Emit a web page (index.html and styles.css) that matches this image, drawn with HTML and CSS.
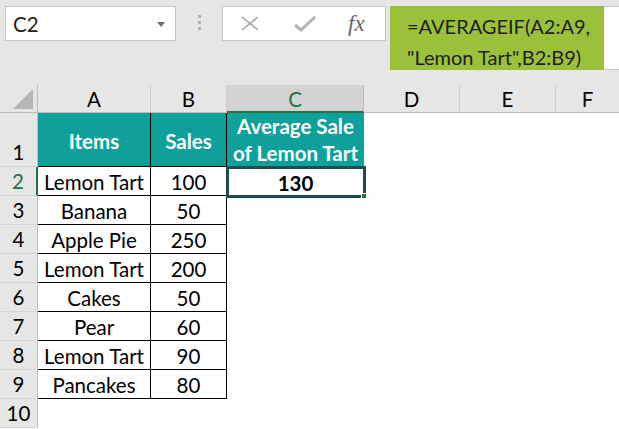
FILE: index.html
```html
<!DOCTYPE html>
<html>
<head>
<meta charset="utf-8">
<link rel="stylesheet" href="styles.css">
</head>
<body>
<div class="toolbar">
  <div class="namebox">
    <span class="ref">C2</span>
    <svg class="dd" width="8" height="5" viewBox="0 0 8 5"><path d="M0 0H8L4 5Z" fill="#6b6b6b"/></svg>
  </div>
  <div class="grip"><i></i><i></i><i></i></div>
  <div class="fxbox">
    <svg class="ico" width="18" height="15" viewBox="0 0 18 15"><path d="M1 1L17 14M17 1L1 14" stroke="#a6a6a6" stroke-width="1.6" fill="none"/></svg>
    <svg class="ico chk" width="22" height="16" viewBox="0 0 22 16"><path d="M1 9L7 14L21 1" stroke="#b3b3b3" stroke-width="3" fill="none"/></svg>
    <span class="fx">fx</span>
  </div>
  <div class="formula">
    <div class="fhl">=AVERAGEIF(A2:A9,<br>"Lemon Tart",B2:B9)</div>
  </div>
</div>
<div class="sheet">
  <div class="corner"><svg width="20" height="20" viewBox="0 0 20 20"><path d="M20 0V20H0Z" fill="#b5b5b5"/></svg></div>
  <div class="ch">A</div>
  <div class="ch">B</div>
  <div class="ch sel">C</div>
  <div class="ch">D</div>
  <div class="ch">E</div>
  <div class="ch last">F</div>

  <div class="rh">1</div>
  <div class="c t hd">Items</div>
  <div class="c t hd">Sales</div>
  <div class="c hd cc">Average Sale<br>of Lemon Tart</div>
  <div class="e"></div><div class="e"></div><div class="e"></div>

  <div class="rh rsel">2</div>
  <div class="c t">Lemon Tart</div>
  <div class="c t">100</div>
  <div class="c active"><b>130</b><span class="handle"></span></div>
  <div class="e"></div><div class="e"></div><div class="e"></div>

  <div class="rh">3</div>
  <div class="c t">Banana</div>
  <div class="c t">50</div>
  <div class="e"></div><div class="e"></div><div class="e"></div><div class="e"></div>

  <div class="rh">4</div>
  <div class="c t">Apple Pie</div>
  <div class="c t">250</div>
  <div class="e"></div><div class="e"></div><div class="e"></div><div class="e"></div>

  <div class="rh">5</div>
  <div class="c t">Lemon Tart</div>
  <div class="c t">200</div>
  <div class="e"></div><div class="e"></div><div class="e"></div><div class="e"></div>

  <div class="rh">6</div>
  <div class="c t">Cakes</div>
  <div class="c t">50</div>
  <div class="e"></div><div class="e"></div><div class="e"></div><div class="e"></div>

  <div class="rh">7</div>
  <div class="c t">Pear</div>
  <div class="c t">60</div>
  <div class="e"></div><div class="e"></div><div class="e"></div><div class="e"></div>

  <div class="rh">8</div>
  <div class="c t">Lemon Tart</div>
  <div class="c t">90</div>
  <div class="e"></div><div class="e"></div><div class="e"></div><div class="e"></div>

  <div class="rh">9</div>
  <div class="c t">Pancakes</div>
  <div class="c t">80</div>
  <div class="e"></div><div class="e"></div><div class="e"></div><div class="e"></div>

  <div class="rh">10</div>
  <div class="e"></div><div class="e"></div><div class="e"></div><div class="e"></div><div class="e"></div><div class="e"></div>
</div>
</body>
</html>
```
FILE: styles.css
```css
* { box-sizing: border-box; }
html, body { margin: 0; padding: 0; background: #fff; }
body {
  width: 619px;
  height: 429px;
  overflow: hidden;
  font-family: Lato, "Liberation Sans", sans-serif;
  color: #000;
}
.toolbar {
  height: 85px;
  background: #e6e6e6;
  display: flex;
  align-items: flex-start;
  padding: 6px 0 0 5px;
}
.namebox {
  width: 171px;
  height: 35px;
  background: #fff;
  border: 1px solid #c6c6c6;
  display: flex;
  align-items: center;
  justify-content: space-between;
  padding: 0 10px 0 7px;
}
.ref { font-size: 20.5px; color: #222; }
.dd { margin-top: 1px; }
.grip {
  width: 46px;
  display: flex;
  flex-direction: column;
  align-items: center;
  gap: 3px;
  padding-top: 9px;
}
.grip i { display: block; width: 3px; height: 3px; background: #b2b2b2; }
.fxbox {
  width: 164px;
  height: 35px;
  background: #fff;
  border: 1px solid #c6c6c6;
  display: flex;
  align-items: center;
  padding-left: 18px;
}
.chk { margin-left: 35px; }
.fx {
  margin-left: 32px;
  font-family: "Liberation Serif", serif;
  font-style: italic;
  font-size: 23px;
  color: #666;
}
.formula {
  margin-left: 4px;
  flex: 1;
  height: 64px;
  background: #fff;
  border-top: 1px solid #c6c6c6;
  border-bottom: 1px solid #c6c6c6;
  display: flex;
}
.fhl {
  width: 214px;
  background: #9bc13b;
  margin-top: -1px;
  margin-bottom: -1px;
  padding: 5px 0 0 17px;
  font-size: 20px;
  line-height: 31px;
  color: #1e1e1e;
  white-space: nowrap;
}
.sheet {
  display: grid;
  grid-template-columns: 38px 113px 76px 137px 96px 96px 63px;
  grid-template-rows: 28px 54px repeat(9, 29px);
  font-size: 20.5px;
}
.corner {
  background: #e6e6e6;
  border-right: 1px solid #bdbdbd;
  border-bottom: 1px solid #bdbdbd;
  display: flex;
  align-items: flex-end;
  justify-content: flex-end;
  padding: 0 4px 3px 0;
}
.corner svg { display: block; }
.ch {
  background: #e6e6e6;
  border-right: 1px solid #cdcdcd;
  border-bottom: 1px solid #bdbdbd;
  display: flex;
  align-items: center;
  justify-content: center;
  padding-top: 1px;
}
.ch.last { border-right: none; }
.ch.sel {
  background: #d2d2d2;
  color: #217346;
  border-bottom: 2px solid #217346;
  border-right-color: #bdbdbd;
}
.rh {
  background: #e6e6e6;
  border-right: 1px solid #bdbdbd;
  border-bottom: 1px solid #d2d2d2;
  display: flex;
  align-items: flex-end;
  justify-content: center;
  padding-bottom: 2px;
}
.rh.rsel {
  color: #217346;
  border-right: 2px solid #217346;
}
.c {
  display: flex;
  align-items: center;
  justify-content: center;
  white-space: nowrap;
  padding-top: 2px;
}
.c.t {
  border-right: 1px solid #000;
  border-bottom: 1px solid #000;
}
.hd {
  background: #0fa09c;
  color: #fff;
  font-weight: bold;
}
.cc {
  line-height: 27px;
  text-align: center;
  padding-top: 0;
}
.active { position: relative; }
.active::before {
  content: "";
  position: absolute;
  left: -1px;
  top: -1px;
  right: -2px;
  bottom: -2px;
  border: 3px solid #1b4e4c;
}
.handle {
  position: absolute;
  right: -3px;
  bottom: -3px;
  width: 6px;
  height: 6px;
  background: #217346;
  border: 1px solid #fff;
}
.e { background: #fff; }
```
